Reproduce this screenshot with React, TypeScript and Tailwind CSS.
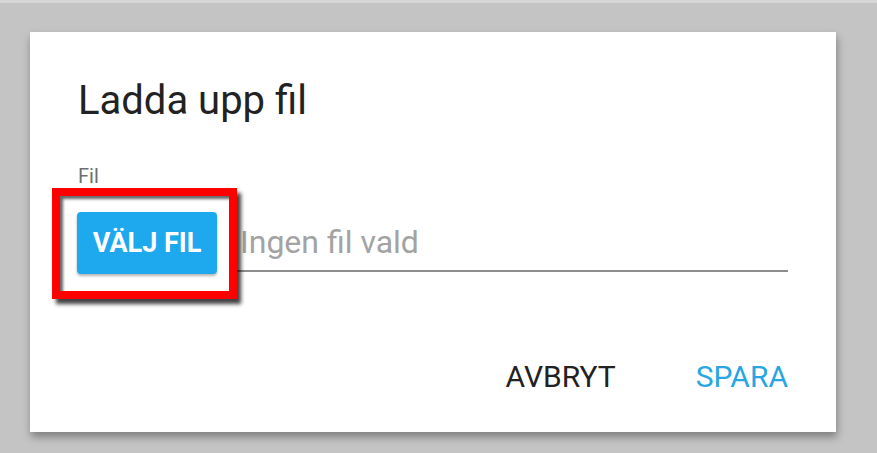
import React from 'react';

export default function App() {
  return (
    <div className="w-[877px] h-[453px] bg-[#c4c4c4] border-t-[3px] border-[#d6d6d6] pt-[29px] pl-[30px] font-['Roboto',sans-serif] overflow-hidden">
      <div className="w-[806px] h-[400px] bg-white shadow-[1px_5px_8px_rgba(0,0,0,0.35)] flex flex-col pl-[48px] pr-[48px]">
        {/* Header */}
        <h2 className="mt-[49px] text-[40px] leading-[40px] text-[#222222]">Ladda upp fil</h2>

        {/* File field */}
        <div className="mt-[45px] text-[20px] leading-[20px] text-[#6f6f6f]">Fil</div>
        <div className="mt-[26px] flex items-end">
          <div className="relative -ml-[1px]">
            <button className="w-[140px] h-[62px] rounded-[4px] bg-[#1ea8ee] text-white font-bold text-[27px] leading-[27px] shadow-[0_2px_3px_rgba(0,0,0,0.3)]">
              VÄLJ FIL
            </button>
            {/* annotation frame */}
            <div className="absolute -left-[25px] -top-[24px] -right-[20px] -bottom-[25px] border-[8px] border-[#ff0000] shadow-[4px_5px_4px_rgba(0,0,0,0.75),inset_3px_3px_3px_rgba(0,0,0,0.6)]" />
          </div>
          <div className="flex-1 ml-[20px] mb-[2px] pl-[3px] pb-[12px] border-b-2 border-[#8d8d8d] text-[32px] leading-[32px] text-[#a3a3a3]">
            Ingen fil vald
          </div>
        </div>

        {/* Footer */}
        <div className="mt-auto mb-[40px] flex justify-end gap-[80px] text-[30px] leading-[30px]">
          <button className="text-[#222222]">AVBRYT</button>
          <button className="text-[#27a6e3]">SPARA</button>
        </div>
      </div>
    </div>
  );
}
